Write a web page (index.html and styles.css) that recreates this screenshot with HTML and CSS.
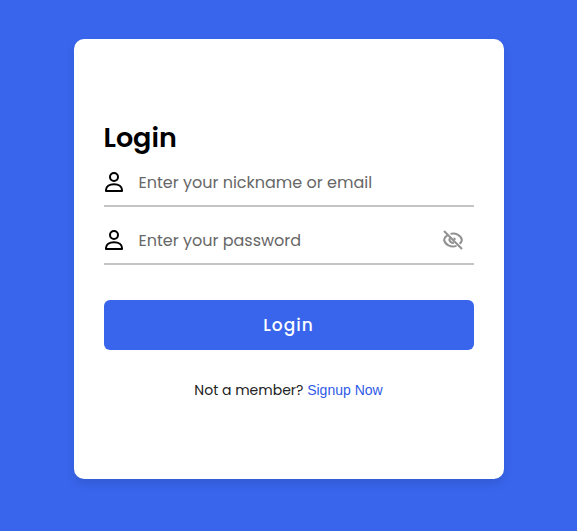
FILE: index.html
```html
<!DOCTYPE html>
<html lang="en">
<head>
<meta charset="utf-8">
<meta name="viewport" content="width=device-width, initial-scale=1">
<title>Login</title>
<link rel="stylesheet" href="styles.css">
</head>
<body>
<main class="card">
  <h1 class="title">Login</h1>
  <form class="form">
    <div class="field">
      <svg class="icon" viewBox="0 0 20 22" aria-hidden="true"><circle cx="10" cy="6" r="4"/><path d="M2 20v-1c0-3.500 3.200-5.800 8-5.800s8 2.300 8 5.800v1z"/></svg>
      <input class="input" type="text" placeholder="Enter your nickname or email" aria-label="Nickname or email">
    </div>
    <div class="field">
      <svg class="icon" viewBox="0 0 20 22" aria-hidden="true"><circle cx="10" cy="6" r="4"/><path d="M2 20v-1c0-3.500 3.200-5.800 8-5.800s8 2.300 8 5.800v1z"/></svg>
      <input class="input" type="password" placeholder="Enter your password" aria-label="Password">
      <button class="toggle" type="button" aria-label="Show password">
        <svg class="eye" viewBox="0 0 20 20" aria-hidden="true"><path d="M1 1l18 18M7.500 3.900C13 2.500 18.300 6 18.900 10c-.2 1.400-1 2.700-2.300 3.800M4.200 5.300C2.400 6.500 1.300 8.200 1.100 10c.8 4.500 6.600 7.800 12.400 5.900M7.100 7.500c-1.700 2.700.4 5.800 3.700 5.400M10.600 8.200c.8.200 1.300.8 1.500 1.600"/></svg>
      </button>
    </div>
    <button class="submit" type="submit">Login</button>
  </form>
  <p class="signup">Not a member? <a class="link" href="#">Signup Now</a></p>
</main>
</body>
</html>
```

FILE: styles.css
```css
* {
  box-sizing: border-box;
}

body {
  margin: 0;
  min-height: 100vh;
  padding: 39px 16px;
  background: #3865ec;
  font-family: Poppins, Inter, sans-serif;
}

.card {
  width: 100%;
  max-width: 430px;
  margin: 0 auto;
  padding: 78px 30px;
  border-radius: 10px;
  background: #fff;
  box-shadow: 0 5px 10px rgba(0, 0, 0, 0.1);
}

.title {
  margin: 0;
  font-size: 27px;
  line-height: 42px;
  font-weight: 600;
  color: #000;
}

.form {
  display: flex;
  flex-direction: column;
  gap: 10px;
}

.field {
  display: flex;
  align-items: center;
  height: 48px;
  border-bottom: 2px solid #c4c4c4;
}

.icon {
  flex: none;
  width: 20px;
  height: 22px;
  fill: none;
  stroke: #000;
  stroke-width: 2;
  stroke-linejoin: round;
}

.input {
  flex: 1;
  min-width: 0;
  height: 46px;
  padding: 0 15px;
  border: 0;
  outline: 0;
  background: none;
  font-family: inherit;
  font-size: 16px;
}

.input::placeholder {
  color: #676767;
  opacity: 1;
}

.toggle {
  display: flex;
  padding: 0 11px 0 0;
  border: 0;
  background: none;
  cursor: pointer;
}

.eye {
  width: 20px;
  height: 20px;
  fill: none;
  stroke: #919191;
  stroke-width: 2;
}

.submit {
  height: 50px;
  margin-top: 25px;
  border: 0;
  border-radius: 6px;
  background: #3865ec;
  color: #fff;
  font-family: inherit;
  font-size: 17px;
  font-weight: 500;
  letter-spacing: 1px;
  cursor: pointer;
}

.signup {
  margin: 30px 0 0;
  text-align: center;
  font-size: 14px;
  line-height: 21px;
  color: #222;
}

.link {
  color: #2f5be8;
  font-family: "Liberation Sans", sans-serif;
  text-decoration: none;
}
```
